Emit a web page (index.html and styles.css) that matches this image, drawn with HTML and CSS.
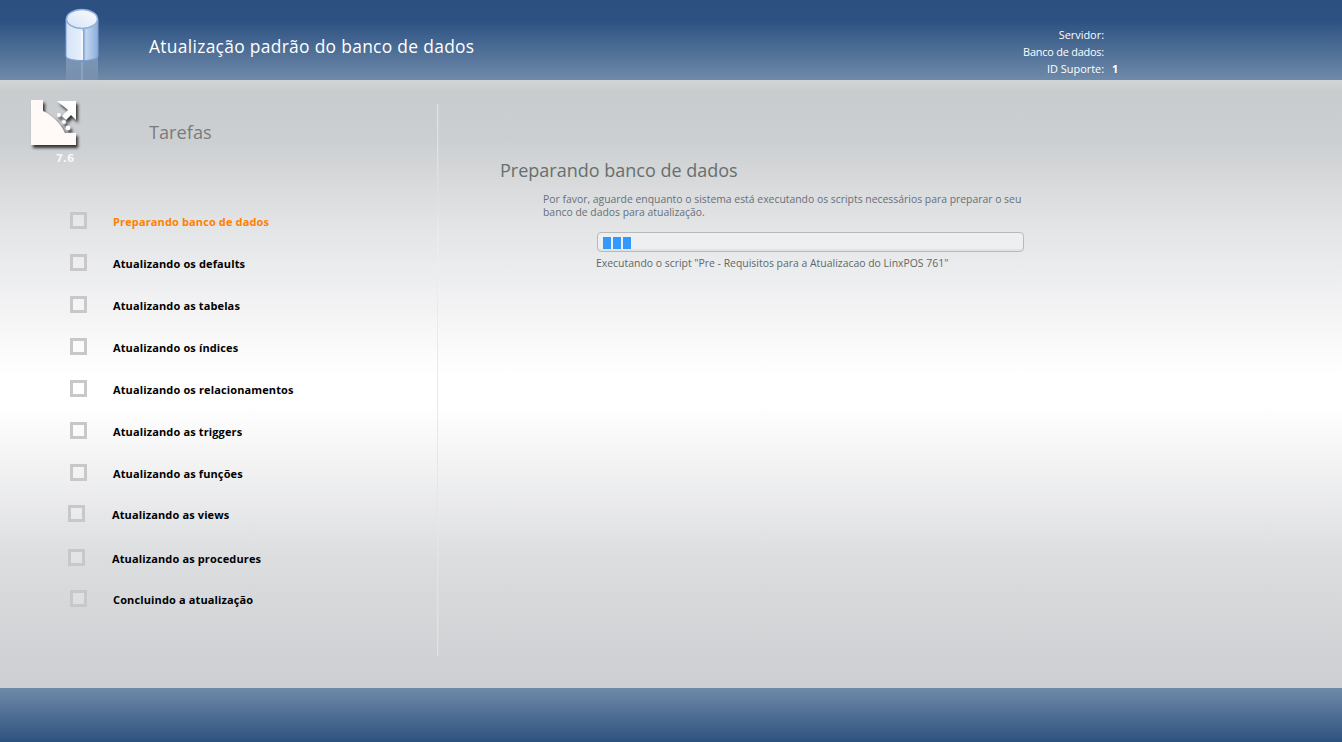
FILE: index.html
```html
<!DOCTYPE html>
<html lang="pt">
<head>
<meta charset="utf-8">
<title>Atualização padrão do banco de dados</title>
<link rel="stylesheet" href="styles.css">
</head>
<body>
<div class="page">
  <header class="top">
    <h1 class="title">Atualização padrão do banco de dados</h1>
    <dl class="info">
      <dt>Servidor:</dt><dd></dd>
      <dt class="tight">Banco de dados:</dt><dd></dd>
      <dt>ID Suporte:</dt><dd>1</dd>
    </dl>
    <svg class="db" width="34" height="84" viewBox="0 0 34 84">
      <defs>
        <linearGradient id="body" x1="0" x2="1" y1="0" y2="0">
          <stop offset="0" stop-color="#d3e3f7"/><stop offset=".5" stop-color="#e8f1fb"/>
          <stop offset=".55" stop-color="#7fa3d6"/><stop offset=".62" stop-color="#c4d6ee"/>
          <stop offset="1" stop-color="#8bacdc"/>
        </linearGradient>
        <linearGradient id="lid" x1="0" x2="1" y1="1" y2="0">
          <stop offset="0" stop-color="#d5e3f5"/><stop offset="1" stop-color="#fbfcfe"/>
        </linearGradient>
        <linearGradient id="refl" x1="0" x2="0" y1="0" y2="1">
          <stop offset="0" stop-color="#a9c0e0" stop-opacity=".45"/><stop offset="1" stop-color="#c8ccd2" stop-opacity="0"/>
        </linearGradient>
      </defs>
      <path d="M1 52v32h32V52c-4 5-28 5-32 0z" fill="url(#refl)"/>
      <path d="M16 58h2v18h-2z" fill="#dfe8f4" opacity=".2"/>
      <path d="M1 15v37c0 6 32 6 32 0V15z" fill="url(#body)" stroke="#7f9fd2"/>
      <path d="M16 27h2v29h-2z" fill="#f2f7fd"/>
      <ellipse cx="17" cy="15" rx="15.5" ry="9.5" fill="url(#lid)" stroke="#8fafdc" stroke-width="1.5"/>
    </svg>
  </header>

  <main class="main">
    <aside class="side">
      <div class="side-head">
        <div class="brand">
          <svg class="brand-icon" width="50" height="50" viewBox="0 0 50 50">
            <path d="M1 0h12v11C20 14 30 22 35 33h11v12H1z" fill="#fffaf7"/>
            <path d="M27 1h19v19l-5-5-5 5-4-4 6-6z" fill="#fff"/>
            <circle cx="29" cy="15" r="2" fill="#fff"/>
            <circle cx="34" cy="22" r="2" fill="#fff"/>
            <circle cx="38" cy="28" r="2.4" fill="#fff"/>
          </svg>
          <span class="version">7.6</span>
        </div>
        <h2 class="side-title">Tarefas</h2>
      </div>
      <ul class="tasks">
        <li class="task current"><span class="check"></span><span class="label">Preparando banco de dados</span></li>
        <li class="task"><span class="check"></span><span class="label">Atualizando os defaults</span></li>
        <li class="task"><span class="check"></span><span class="label">Atualizando as tabelas</span></li>
        <li class="task"><span class="check"></span><span class="label">Atualizando os índices</span></li>
        <li class="task"><span class="check"></span><span class="label">Atualizando os relacionamentos</span></li>
        <li class="task"><span class="check"></span><span class="label">Atualizando as triggers</span></li>
        <li class="task"><span class="check"></span><span class="label">Atualizando as funções</span></li>
        <li class="task shifted short"><span class="check"></span><span class="label">Atualizando as views</span></li>
        <li class="task shifted tall"><span class="check"></span><span class="label">Atualizando as procedures</span></li>
        <li class="task"><span class="check"></span><span class="label">Concluindo a atualização</span></li>
      </ul>
    </aside>
    <div class="divider"></div>
    <section class="content">
      <h2 class="content-title">Preparando banco de dados</h2>
      <p class="message">Por favor, aguarde enquanto o sistema está executando os scripts necessários para preparar o seu banco de dados para atualização.</p>
      <div class="progress-wrap">
        <div class="progress"><i></i><i></i><i></i></div>
        <p class="script">Executando o script "Pre - Requisitos para a Atualizacao do LinxPOS 761"</p>
      </div>
    </section>
  </main>

  <footer class="bottom"></footer>
</div>
</body>
</html>
```
FILE: styles.css
```css
* { box-sizing: border-box; }
html, body { margin: 0; height: 100%; }
body { font-family: "DejaVu Sans", Verdana, sans-serif; overflow: hidden; }

.page { width: 1342px; height: 742px; display: flex; flex-direction: column; }

.top {
  position: relative;
  flex: 0 0 80px;
  padding-left: 149px;
  display: flex;
  background: linear-gradient(#2b5080 0, #2c5182 20px, #6f8aa9 80px);
  color: #fff;
}
.title { margin: 0; padding-top: 36px; font-size: 17.4px; line-height: 21px; font-weight: 400; font-family: "Open Sans", sans-serif; width: 871px; letter-spacing: .31px; white-space: nowrap; }
.info {
  margin: 0;
  padding-top: 26px;
  display: grid;
  grid-template-columns: 84px 30px;
  grid-auto-rows: 17px;
  column-gap: 8px;
  font-family: "Open Sans", sans-serif;
  font-size: 10.9px;
  line-height: 17px;
}
.info dt { text-align: right; white-space: nowrap; }
.info dt.tight { letter-spacing: -.2px; }
.info dd { margin: 0; font-weight: 700; }
.db { position: absolute; left: 65px; top: 4px; }

.main {
  flex: 1;
  display: flex;
  min-height: 0;
  background: linear-gradient(#d2d4d5 0, #c9ccce 12px, #cccfd1 60px, #e4e5e7 150px, #f7f7f8 250px, #fff 295px, #fff 325px, #f7f7f8 365px, #dcdddf 480px, #ccced1 608px);
}

.side { flex: 0 0 437px; }
.side-head { height: 122px; display: flex; }
.brand { flex: 0 0 149px; padding: 20px 0 0 30px; }
.brand-icon { display: block; filter: drop-shadow(2px 3px 1.5px #333); }
.version { display: block; width: 70px; text-align: center; font-size: 10.5px; line-height: 13px; font-weight: 700; color: #f7f7f7; margin-top: 2px; }
.side-title { margin: 0; padding-top: 40px; font-family: "Open Sans", sans-serif; font-size: 18.2px; line-height: 25px; font-weight: 400; color: #7b7b7b; }

.tasks { list-style: none; margin: 0; padding: 0; }
.task {
  height: 42px;
  padding: 10px 0 0 70px;
  display: flex;
  color: #000;
  font-size: 11px;
  line-height: 18px;
  font-weight: 700;
  font-family: "Open Sans", sans-serif;
  letter-spacing: .13px;
}
.task.current { color: #ff8000; }
.check { flex: 0 0 17px; height: 17px; margin-right: 26px; border: 3px solid #c8c8c8; background: rgba(255,255,255,.18); }
.label { margin-top: 1px; }
.task.shifted { padding-left: 68px; }
.task.shifted .check { margin-right: 27px; }
.task.short { height: 44px; padding-top: 9px; }
.task.tall { height: 40px; padding-top: 9px; }

.divider {
  flex: 0 0 1px;
  margin: 24px 0 32px;
  box-shadow: 1px 0 0 rgba(255,255,255,.12);
  background: linear-gradient(#dfe1e3 0, #dfe1e3 70px, transparent 92px, transparent 108px, #eceded 128px, #dfe1e3 100%);
}

.content { flex: 1; padding: 78px 0 0 62px; color: #66706c; font-family: "Open Sans", sans-serif; }
.content-title { margin: 0; font-size: 18px; line-height: 24px; font-weight: 400; color: #66706c; }
.message { margin: 11px 0 0 43px; width: 490px; font-size: 10.4px; line-height: 13px; color: #66707a; }
.progress-wrap { margin: 13px 0 0 97px; width: 427px; }
.progress {
  height: 20px;
  padding: 4px 5px;
  display: flex;
  gap: 2px;
  border: 1px solid #b7b9bb;
  border-radius: 4px;
  background: #eeeff0;
  box-shadow: inset 0 -2px 0 #e2e3e5;
}
.progress i { width: 8px; height: 12px; background: #3399ff; }
.script { margin: 4px 0 0 -1px; font-size: 10.43px; line-height: 15px; color: #5f6866; white-space: nowrap; }

.bottom { flex: 0 0 54px; background: linear-gradient(#6f8aa9 0, #335682 50px, #2b5080 54px); }
```
